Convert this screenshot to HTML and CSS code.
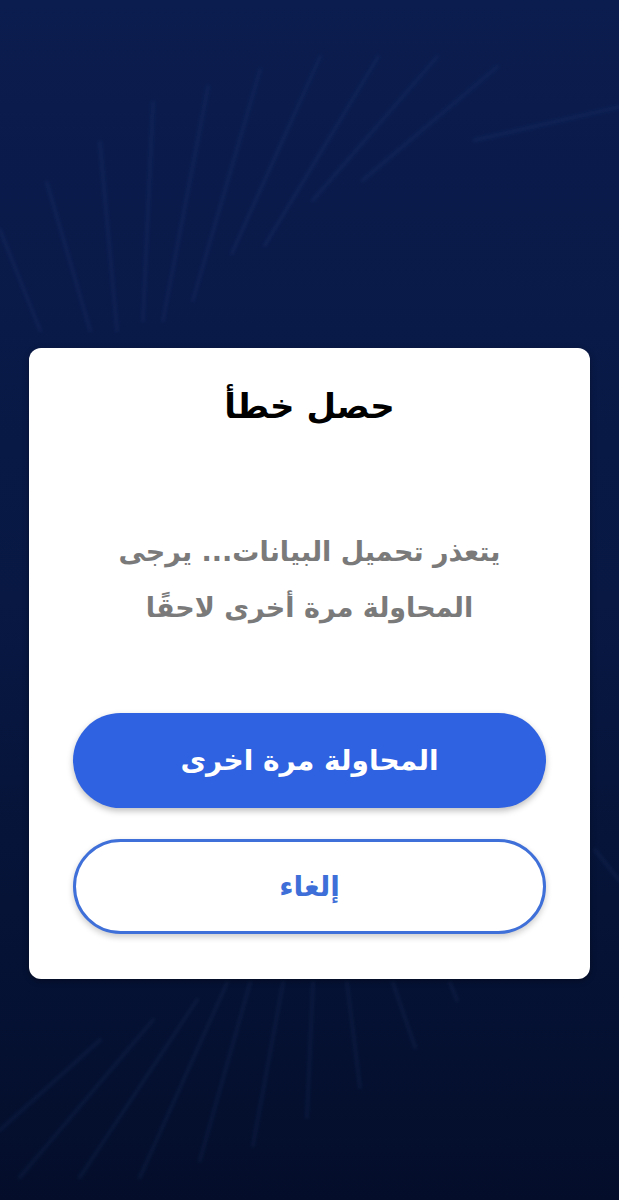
FILE: index.html
```html
<!DOCTYPE html>
<html lang="ar" dir="rtl">
<head>
  <meta charset="UTF-8">
  <title>حصل خطأ</title>
  <link rel="stylesheet" href="styles.css">
</head>
<body>

  <!-- خلفية الأشعة -->
  <svg class="rays" width="619" height="1200" viewBox="0 0 619 1200">
    <defs>
      <filter id="soft"><feGaussianBlur stdDeviation="1.6"/></filter>
    </defs>
    <g filter="url(#soft)">
      <line x1="320" y1="57" x2="232" y2="253"/>
      <line x1="378" y1="57" x2="265" y2="245"/>
      <line x1="437" y1="57" x2="313" y2="200"/>
      <line x1="497" y1="67" x2="363" y2="180"/>
      <line x1="619" y1="107" x2="475" y2="140"/>
      <line x1="260" y1="70" x2="193" y2="300"/>
      <line x1="208" y1="87" x2="163" y2="320"/>
      <line x1="153" y1="103" x2="143" y2="320"/>
      <line x1="100" y1="143" x2="117" y2="330"/>
      <line x1="47" y1="183" x2="90" y2="330"/>
      <line x1="0" y1="230" x2="40" y2="330"/>
      <line x1="200" y1="1160" x2="250" y2="983"/>
      <line x1="253" y1="1145" x2="283" y2="983"/>
      <line x1="307" y1="1117" x2="313" y2="983"/>
      <line x1="360" y1="1087" x2="347" y2="983"/>
      <line x1="415" y1="1047" x2="393" y2="983"/>
      <line x1="457" y1="1000" x2="450" y2="983"/>
      <line x1="140" y1="1177" x2="227" y2="983"/>
      <line x1="80" y1="1177" x2="197" y2="1000"/>
      <line x1="20" y1="1177" x2="153" y2="1020"/>
      <line x1="0" y1="1130" x2="100" y2="1040"/>
      <line x1="619" y1="880" x2="595" y2="850"/>
    </g>
  </svg>

  <div class="screen">
    <div class="dialog">
      <h2 class="dialog-title">حصل خطأ</h2>
      <p class="dialog-text">يتعذر تحميل البيانات... يرجى المحاولة مرة أخرى لاحقًا</p>
      <div class="dialog-actions">
        <button class="btn btn-primary">المحاولة مرة اخرى</button>
        <button class="btn btn-outline">إلغاء</button>
      </div>
    </div>
  </div>

</body>
</html>
```

FILE: styles.css
```css
body {
  margin: 0;
  height: 1200px;
  overflow: hidden;
  font-family: 'DejaVu Sans', 'Noto Sans', sans-serif;
  background: linear-gradient(180deg, #0b1c4e 0%, #081843 50%, #040e2b 100%);
  position: relative;
}

.rays {
  position: absolute;
  top: 0;
  left: 0;
  pointer-events: none;
}

.rays line {
  stroke: rgba(80, 120, 190, 0.08);
  stroke-width: 4;
  stroke-linecap: round;
}

.screen {
  position: relative;
  padding: 348px 29px 0;
}

.dialog {
  background: #fff;
  border-radius: 12px;
  padding: 30px 44px 45px;
  box-shadow: 0 2px 6px rgba(0, 0, 0, 0.3);
  text-align: center;
}

.dialog-title {
  margin: 0;
  font-size: 34px;
  line-height: 56px;
  font-weight: bold;
  color: #000;
}

.dialog-text {
  margin: 90px 0 77px;
  font-size: 27px;
  line-height: 56px;
  font-weight: bold;
  color: #7a7a7a;
  padding: 0 20px;
}

.dialog-actions {
  display: flex;
  flex-direction: column;
  gap: 31px;
}

.btn {
  height: 95px;
  border-radius: 48px;
  font-family: inherit;
  font-size: 28px;
  font-weight: bold;
  cursor: pointer;
}

.btn-primary {
  background: #2f62e0;
  color: #fff;
  border: none;
  box-shadow: 0 3px 6px rgba(0, 0, 0, 0.25);
}

.btn-outline {
  background: #fff;
  color: #3e6fd8;
  border: 3px solid #3f6fd8;
  box-shadow: 0 3px 6px rgba(0, 0, 0, 0.2);
}
```
